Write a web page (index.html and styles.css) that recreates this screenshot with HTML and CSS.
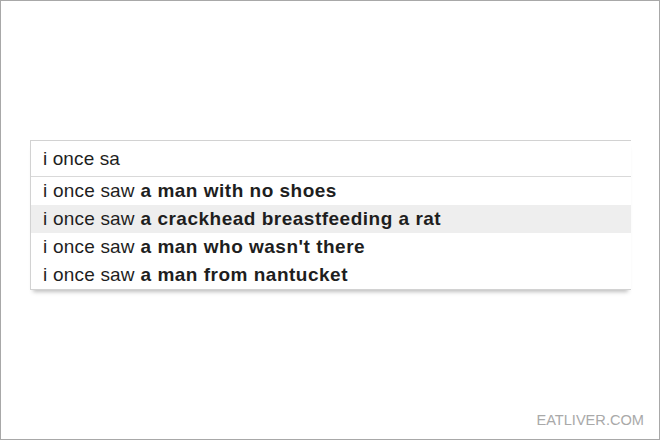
FILE: index.html
```
<html>
  <head>
    <meta charset="utf-8" />
    <title>i once sa</title>
    <link rel="stylesheet" href="styles.css">
  </head>
  <body>
    <div class="frame">
      <div class="search">
        <div class="search-input">i once sa</div>
        <div class="suggest">
          <div class="suggest-row">i once saw<b> a man with no shoes</b></div>
          <div class="suggest-row active">i once saw<b> a crackhead breastfeeding a rat</b></div>
          <div class="suggest-row">i once saw<b> a man who wasn't there</b></div>
          <div class="suggest-row">i once saw<b> a man from nantucket</b></div>
        </div>
      </div>
      <div class="credit">EATLIVER.COM</div>
    </div>
  </body>
</html>
```

FILE: styles.css
```
body {
    margin: 0;
    font-family: "Liberation Sans", Arial, sans-serif;
}
.frame {
    box-sizing: border-box;
    width: 660px;
    height: 440px;
    border: 1px solid #a8a8a8;
    padding: 139px 0 0 29px;
    display: flex;
    flex-direction: column;
}
.search {
    width: 600px;
    border: 1px solid #d2d2d2;
    border-right: none;
    box-shadow: 0 5px 4px -3px rgba(0, 0, 0, 0.25);
}
.search-input {
    height: 35px;
    line-height: 36px;
    padding-left: 12px;
    font-size: 19px;
    letter-spacing: 0.1px;
    color: #1e1e1e;
    border-bottom: 1px solid #d9d9d9;
}
.suggest-row {
    height: 28px;
    line-height: 28px;
    padding-left: 12px;
    font-size: 19px;
    letter-spacing: 0.2px;
    color: #1e1e1e;
}
.suggest-row b {
    font-weight: bold;
    letter-spacing: 0.5px;
}
.active {
    background-color: #eeeeee;
}
.credit {
    margin-top: auto;
    align-self: flex-end;
    margin-right: 15px;
    margin-bottom: 11px;
    font-size: 14.6px;
    color: #a9a9a9;
}
```
